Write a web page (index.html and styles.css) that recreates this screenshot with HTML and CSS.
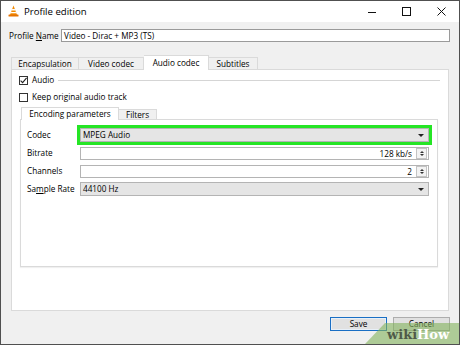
FILE: index.html
```html
<!DOCTYPE html>
<html>
<head>
<meta charset="utf-8">
<link rel="stylesheet" href="styles.css">
</head>
<body>
<div class="window">
  <div class="titlebar">
    <svg class="vlc" width="11" height="12" viewBox="0 0 11 12">
      <path d="M5.5 0.5 L9 10 L2 10 Z" fill="#f28a00"/>
      <path d="M4.2 4 L6.8 4 L7.3 5.4 L3.7 5.4 Z" fill="#fff"/>
      <path d="M3.2 6.9 L7.8 6.9 L8.3 8.3 L2.7 8.3 Z" fill="#fff"/>
      <rect x="0.5" y="9.5" width="10" height="2" rx="0.6" fill="#e67300"/>
    </svg>
    <span class="title">Profile edition</span>
    <div class="controls">
      <span class="ctl"><svg width="8" height="8" viewBox="0 0 8 8"><path d="M0 4.5 H8" stroke="#111" stroke-width="1"/></svg></span>
      <span class="ctl"><svg width="9" height="9" viewBox="0 0 9 9"><rect x="0.5" y="0.5" width="8" height="8" fill="none" stroke="#111" stroke-width="1"/></svg></span>
      <span class="ctl"><svg width="9" height="9" viewBox="0 0 9 9"><path d="M0.5 0.5 L8.5 8.5 M8.5 0.5 L0.5 8.5" stroke="#111" stroke-width="1"/></svg></span>
    </div>
  </div>

  <div class="profile-row">
    <span class="label-profile">Profile <u>N</u>ame</span>
    <div class="text-input">Video - Dirac + MP3 (TS)</div>
  </div>

  <div class="tabs main-tabs">
    <span class="tab t-enc">Encapsulation</span>
    <span class="tab t-video">Video codec</span>
    <span class="tab active t-audio">Audio codec</span>
    <span class="tab t-sub">Subtitles</span>
  </div>

  <div class="pane">
    <div class="check-row audio-row">
      <span class="checkbox"><svg width="9" height="9" viewBox="0 0 9 9"><path d="M1.6 4.6 L3.6 6.6 L7.6 1.8" fill="none" stroke="#222" stroke-width="1.1"/></svg></span>
      <span class="check-label">Audio</span>
      <span class="group-line"></span>
    </div>
    <div class="check-row keep-row">
      <span class="checkbox"></span>
      <span class="check-label">Keep original audio track</span>
    </div>

    <div class="inner">
      <div class="tabs inner-tabs">
        <span class="tab active t-encp">Encoding parameters</span>
        <span class="tab t-filters">Filters</span>
      </div>
      <div class="inner-pane">
        <div class="form-row first">
          <span class="form-label">Codec</span>
          <div class="combo highlight"><span class="value">MPEG Audio</span><span class="arrow"></span></div>
        </div>
        <div class="form-row">
          <span class="form-label">Bitrate</span>
          <div class="spin"><span class="spin-value">128 kb/s</span><span class="spin-btns"><span class="up"></span><span class="down"></span></span></div>
        </div>
        <div class="form-row">
          <span class="form-label">Channels</span>
          <div class="spin"><span class="spin-value">2</span><span class="spin-btns"><span class="up"></span><span class="down"></span></span></div>
        </div>
        <div class="form-row">
          <span class="form-label">Sa<u>m</u>ple Rate</span>
          <div class="combo"><span class="value">44100 Hz</span><span class="arrow"></span></div>
        </div>
      </div>
    </div>
  </div>

  <div class="buttons">
    <span class="btn default">Save</span>
    <span class="btn">Cancel</span>
  </div>

  <div class="wikihow"><span class="wiki">wiki</span><span class="how">How</span></div>
</div>
</body>
</html>
```

FILE: styles.css
```css
html, body {
  margin: 0;
  padding: 0;
  background: #f0f0f0;
}

.window {
  position: relative;
  width: 460px;
  height: 345px;
  box-sizing: border-box;
  border: 1px solid #505050;
  background: #f0f0f0;
  font-family: "Open Sans", "Noto Sans", sans-serif;
  font-size: 8.2px;
  color: #000;
  display: flex;
  flex-direction: column;
  overflow: hidden;
}

.titlebar {
  height: 21px;
  flex: none;
  background: #fff;
  display: flex;
  align-items: center;
  padding-left: 7px;
}

.vlc {
  display: block;
  margin-top: -1px;
}

.title {
  margin-left: 5px;
  font-size: 9.6px;
  line-height: 12px;
}

.controls {
  margin-left: auto;
  display: flex;
  height: 21px;
}

.ctl {
  width: 35px;
  height: 21px;
  display: flex;
  align-items: center;
  justify-content: center;
}

.profile-row {
  margin: 7px 9px 0 8px;
  height: 13px;
  display: flex;
  align-items: center;
  flex: none;
}

.label-profile {
  width: 52px;
  flex: none;
  line-height: 13px;
}

.text-input {
  flex: 1;
  height: 13px;
  box-sizing: border-box;
  border: 1px solid #9a9a9a;
  background: #fff;
  padding-left: 2px;
  line-height: 11px;
}

.tabs {
  display: flex;
  align-items: flex-end;
  flex: none;
  position: relative;
  z-index: 1;
}

.main-tabs {
  margin: 13px 0 0 10px;
  height: 14px;
}

.tab {
  box-sizing: border-box;
  height: 12px;
  border: 1px solid #dadada;
  border-bottom: none;
  background: #f0f0f0;
  text-align: center;
  line-height: 11px;
  white-space: nowrap;
}

.tab.active {
  height: 15px;
  margin-bottom: -1px;
  background: #fff;
  line-height: 13px;
}

.t-enc { width: 68px; }
.t-video { width: 65px; border-left: none; }
.t-audio { width: 65px; border-left: none; }
.t-sub { width: 49px; border-left: none; }

.pane {
  margin: 0 10px 0 10px;
  height: 242px;
  box-sizing: border-box;
  border: 1px solid #dadada;
  background: #fff;
  flex: none;
  display: flex;
  flex-direction: column;
}

.check-row {
  display: flex;
  align-items: center;
  height: 10px;
  padding-left: 7px;
}

.audio-row { margin-top: 5px; }
.keep-row { margin-top: 7px; }

.checkbox {
  width: 9px;
  height: 9px;
  box-sizing: border-box;
  border: 1px solid #333;
  background: #fff;
  flex: none;
  display: flex;
  align-items: center;
  justify-content: center;
}

.checkbox svg {
  display: block;
  margin: -1px;
}

.check-label {
  margin-left: 4px;
  line-height: 10px;
}

.group-line {
  flex: 1;
  height: 1px;
  background: #d5d5d5;
  margin: 1px 8px 0 4px;
}

.inner {
  margin: 5px 10px 0 8px;
  display: flex;
  flex-direction: column;
}

.inner-tabs {
  height: 12px;
  margin-left: 1px;
}

.inner-tabs .tab {
  height: 10px;
  line-height: 9px;
}

.inner-tabs .tab.active {
  height: 13px;
  line-height: 12px;
}

.t-encp { width: 98px; }
.t-filters { width: 38px; border-left: none; }

.inner-pane {
  height: 148px;
  box-sizing: border-box;
  border: 1px solid #dadada;
  box-shadow: 0 1px 1px rgba(0,0,0,0.06);
  background: #fff;
  display: flex;
  flex-direction: column;
  gap: 4px;
  padding-top: 8px;
}

.form-row {
  display: flex;
  align-items: center;
  height: 14px;
  padding-left: 6px;
  margin-right: 8px;
}

.form-label {
  width: 53px;
  flex: none;
  line-height: 14px;
}

.combo {
  flex: 1;
  height: 14px;
  box-sizing: border-box;
  border: 1px solid #b4b4b4;
  background: #e5e5e5;
  display: flex;
  align-items: center;
  padding: 0 4px 0 2px;
}

.combo .value {
  flex: 1;
  line-height: 12px;
}

.arrow {
  width: 0;
  height: 0;
  border-left: 3px solid transparent;
  border-right: 3px solid transparent;
  border-top: 3px solid #222;
}

.highlight {
  outline: 3px solid #25e525;
  outline-offset: 0;
}

.spin {
  flex: 1;
  height: 13px;
  box-sizing: border-box;
  border: 1px solid #b4b4b4;
  background: #fff;
  display: flex;
  align-items: center;
  padding-right: 1px;
}

.spin-value {
  flex: 1;
  text-align: right;
  padding-right: 4px;
  line-height: 11px;
}

.spin-btns {
  width: 11px;
  height: 11px;
  box-sizing: border-box;
  border: 1px solid #c4c4c4;
  background: #f3f3f3;
  display: flex;
  flex-direction: column;
  align-items: center;
  justify-content: center;
  gap: 1px;
}

.spin-btns .up {
  width: 0;
  height: 0;
  border-left: 2px solid transparent;
  border-right: 2px solid transparent;
  border-bottom: 2px solid #333;
}

.spin-btns .down {
  width: 0;
  height: 0;
  border-left: 2px solid transparent;
  border-right: 2px solid transparent;
  border-top: 2px solid #333;
}

.buttons {
  margin: 6px 9px 0 0;
  height: 14px;
  display: flex;
  justify-content: flex-end;
  gap: 6px;
  flex: none;
}

.btn {
  width: 57px;
  height: 14px;
  box-sizing: border-box;
  border: 1px solid #adadad;
  background: #e1e1e1;
  text-align: center;
  line-height: 12px;
}

.btn.default {
  border: 1px solid #1a6fc4;
  box-shadow: inset 0 0 0 1px #e8f0f8;
}

.wikihow {
  position: absolute;
  right: 0;
  bottom: 0;
  width: 94px;
  height: 21px;
  background: rgba(130, 178, 92, 0.6);
  clip-path: polygon(20px 0, 100% 0, 100% 100%, 0 100%);
  font-family: "DejaVu Serif", serif;
  font-weight: bold;
  font-size: 13px;
  line-height: 16px;
  padding: 4px 0 0 22px;
  box-sizing: border-box;
  white-space: nowrap;
}

.wiki { color: #4f5a48; }
.how { color: #fff; }
```
